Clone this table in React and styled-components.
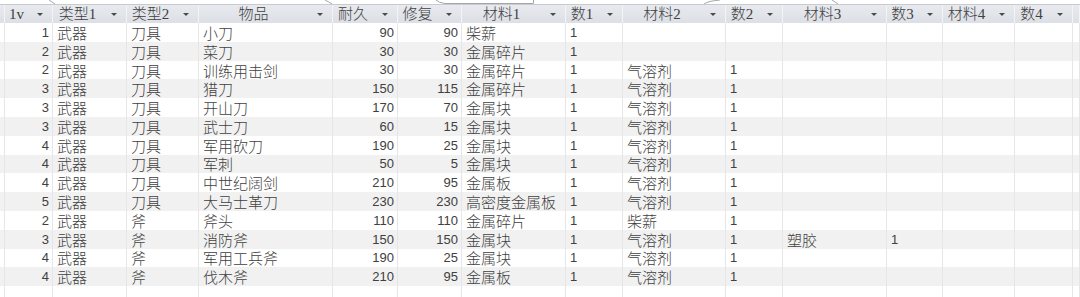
import React from "react";
import styled, { createGlobalStyle } from "styled-components";

const GlobalStyle = createGlobalStyle`
    html, body {
        margin: 0;
        padding: 0;
        background: #ffffff;
    }
    body {
        width: 1080px;
        height: 297px;
        overflow: hidden;
        font-family: "Liberation Sans", "Noto Sans CJK SC", sans-serif;
    }
`;

const COLS = "5px 48px 74px 72px 134px 65px 64px 104px 57px 103px 57px 104px 56px 72px 58px 1fr";

const Sheet = styled.div`
    width: 1080px;
    height: 297px;
    overflow: hidden;
    display: flex;
    flex-direction: column;
    background: #ffffff;
`;

const TabEdge = styled.svg`
    display: block;
    flex: none;
`;

const HeaderRow = styled.div`
    display: grid;
    grid-template-columns: ${COLS};
    height: 19px;
    flex: none;
    background: linear-gradient(#e8eaee, #dcdfe5);
    border-top: 1px solid #c6cad1;
    box-sizing: border-box;
`;

const HeadCell = styled.div`
    display: flex;
    align-items: center;
    border-right: 1px solid #f3f4f6;
    color: #404040;
    font-size: 15px;
    font-weight: 300;
    line-height: 18px;
    overflow: hidden;
    white-space: nowrap;

    span {
        flex: 1;
        text-align: center;
        font-family: "Liberation Serif", "Noto Sans CJK SC", serif;
    }
`;

const Arrow = styled.i`
    flex: none;
    width: 24px;
    display: flex;
    justify-content: center;

    &::after {
        content: "";
        border-left: 3px solid transparent;
        border-right: 3px solid transparent;
        border-top: 3px solid #4a4a4a;
    }
`;

const Row = styled.div`
    display: grid;
    grid-template-columns: ${COLS};
    height: 18.8px;
    flex: none;
    background: ${(p) => (p.$alt ? "#f1f1f1" : "#ffffff")};
`;

const Cell = styled.div`
    display: flex;
    align-items: center;
    justify-content: ${(p) => (p.$right ? "flex-end" : "flex-start")};
    padding: 0 ${(p) => (p.$right ? "3px" : "0")} 0 ${(p) => (p.$right ? "0" : "4px")};
    border-right: 1px solid #e6e6e6;
    color: #404040;
    font-size: ${(p) => (p.$num ? "13px" : "15px")};
    font-weight: 300;
    white-space: nowrap;
    overflow: hidden;
`;

const columns = [
    { title: "1v", right: true, num: true },
    { title: "类型1" },
    { title: "类型2" },
    { title: "物品" },
    { title: "耐久", right: true, num: true },
    { title: "修复", right: true, num: true },
    { title: "材料1" },
    { title: "数1", num: true },
    { title: "材料2" },
    { title: "数2", num: true },
    { title: "材料3" },
    { title: "数3", num: true },
    { title: "材料4" },
    { title: "数4", num: true },
];

const rows = [
    ["1", "武器", "刀具", "小刀", "90", "90", "柴薪", "1"],
    ["2", "武器", "刀具", "菜刀", "30", "30", "金属碎片", "1"],
    ["2", "武器", "刀具", "训练用击剑", "30", "30", "金属碎片", "1", "气溶剂", "1"],
    ["3", "武器", "刀具", "猎刀", "150", "115", "金属碎片", "1", "气溶剂", "1"],
    ["3", "武器", "刀具", "开山刀", "170", "70", "金属块", "1", "气溶剂", "1"],
    ["3", "武器", "刀具", "武士刀", "60", "15", "金属块", "1", "气溶剂", "1"],
    ["4", "武器", "刀具", "军用砍刀", "190", "25", "金属块", "1", "气溶剂", "1"],
    ["4", "武器", "刀具", "军刺", "50", "5", "金属块", "1", "气溶剂", "1"],
    ["4", "武器", "刀具", "中世纪阔剑", "210", "95", "金属板", "1", "气溶剂", "1"],
    ["5", "武器", "刀具", "大马士革刀", "230", "230", "高密度金属板", "1", "气溶剂", "1"],
    ["2", "武器", "斧", "斧头", "110", "110", "金属碎片", "1", "柴薪", "1"],
    ["3", "武器", "斧", "消防斧", "150", "150", "金属块", "1", "气溶剂", "1", "塑胶", "1"],
    ["4", "武器", "斧", "军用工兵斧", "190", "25", "金属块", "1", "气溶剂", "1"],
    ["4", "武器", "斧", "伐木斧", "210", "95", "金属板", "1", "气溶剂", "1"],
];

function TopTabs() {
    return (
        <TabEdge width="1080" height="4" viewBox="0 0 1080 4">
            <g fill="none" stroke="#a2a7ae" strokeWidth="1">
                <path d="M49 0 Q52 2 55 4" />
                <path d="M325 0 Q329 2 332 4" />
                <path d="M436 0 Q439 3 445 3.5 L533.5 3.5 L533.5 0" />
                <path d="M720 0 Q708 1 704 4" />
                <path d="M832 0 Q835 2 838 4" />
            </g>
        </TabEdge>
    );
}

export default function App() {
    return (
        <>
            <GlobalStyle />
            <Sheet>
                <TopTabs />
                <HeaderRow>
                    <HeadCell />
                    {columns.map((c) => (
                        <HeadCell key={c.title}>
                            <span>{c.title}</span>
                            <Arrow />
                        </HeadCell>
                    ))}
                    <HeadCell />
                </HeaderRow>
                {rows.map((r, i) => (
                    <Row key={i} $alt={i % 2 === 1}>
                        <Cell />
                        {columns.map((c, j) => (
                            <Cell key={j} $right={c.right} $num={c.num}>
                                {r[j] || ""}
                            </Cell>
                        ))}
                        <Cell />
                    </Row>
                ))}
                <Row>
                    <Cell />
                    {columns.map((c, j) => (
                        <Cell key={j} />
                    ))}
                    <Cell />
                </Row>
            </Sheet>
        </>
    );
}
